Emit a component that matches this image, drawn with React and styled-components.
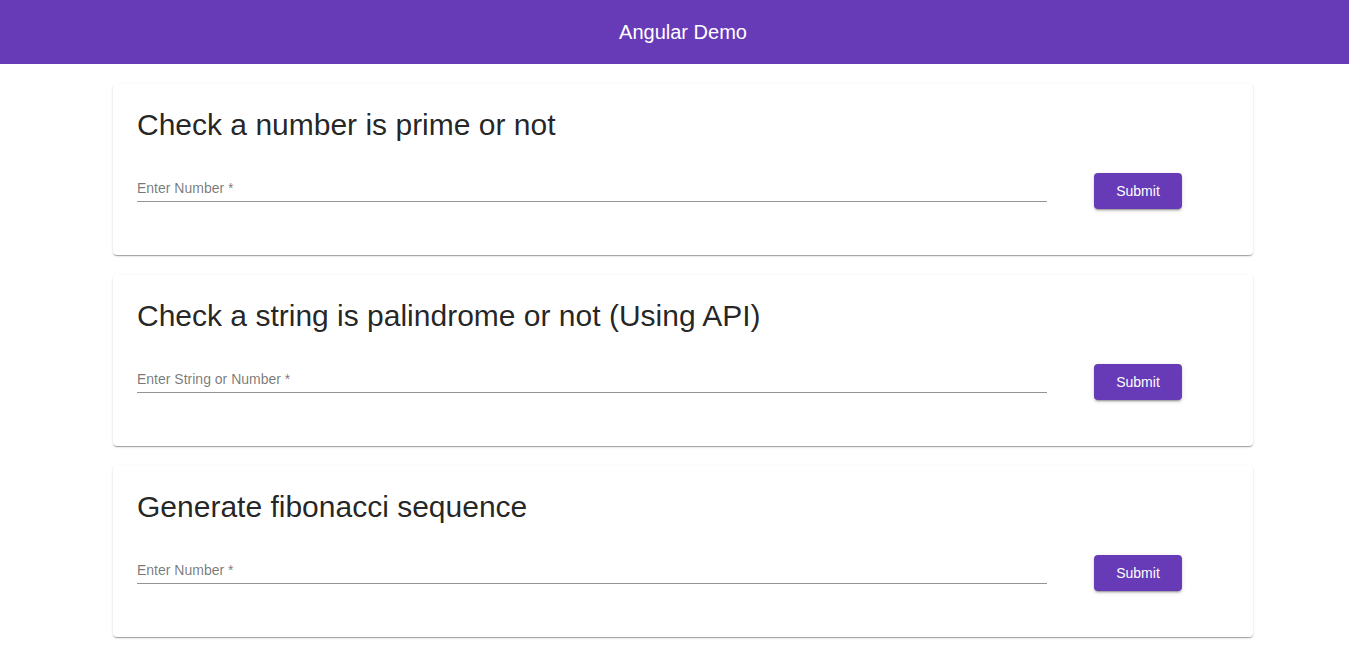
import styled, { createGlobalStyle } from "styled-components";

const GlobalStyle = createGlobalStyle`
    body {
        margin: 0;
        background: #fff;
        overflow-x: hidden;
        font-family: "Liberation Sans", Arial, sans-serif;
    }
`;

// the page was laid out at 1366px wide, so the centre sits at 683
const Page = styled.div`
    width: 1366px;
`;

const Toolbar = styled.header`
    display: flex;
    align-items: center;
    justify-content: center;
    height: 64px;
    background: #673ab7;
    color: #fff;
    font-size: 20px;
`;

const Main = styled.main`
    display: flex;
    flex-direction: column;
    gap: 20px;
    width: 1140px;
    margin: 20px auto;
`;

const Card = styled.section`
    background: #fff;
    border-radius: 4px;
    padding: 24px 24px 0;
    height: 171px;
    box-sizing: border-box;
    box-shadow: 0 2px 1px -1px rgba(0, 0, 0, 0.2), 0 1px 1px 0 rgba(0, 0, 0, 0.14),
        0 1px 3px 0 rgba(0, 0, 0, 0.12);
`;

const Title = styled.h2`
    margin: 0;
    font-size: 30px;
    font-weight: 400;
    line-height: 34px;
    color: rgba(0, 0, 0, 0.87);
`;

const FormRow = styled.div`
    display: flex;
    align-items: flex-start;
    gap: 47px;
    margin-top: 31px;
`;

const Field = styled.label`
    display: block;
    width: 910px;
    height: 29px;
    box-sizing: border-box;
    padding-top: 7px;
    border-bottom: 1px solid #949494;
    font-size: 14px;
    line-height: 16px;
    color: rgba(0, 0, 0, 0.54);
`;

const Button = styled.button`
    width: 88px;
    height: 36px;
    border: none;
    border-radius: 4px;
    background: #673ab7;
    color: #fff;
    font-family: inherit;
    font-size: 14px;
    font-weight: 500;
    box-shadow: 0 3px 1px -2px rgba(0, 0, 0, 0.2), 0 2px 2px 0 rgba(0, 0, 0, 0.14),
        0 1px 5px 0 rgba(0, 0, 0, 0.12);
    cursor: pointer;
`;

const forms = [
    { title: "Check a number is prime or not", label: "Enter Number *" },
    { title: "Check a string is palindrome or not (Using API)", label: "Enter String or Number *" },
    { title: "Generate fibonacci sequence", label: "Enter Number *" },
];

const App = () => {
    return (
        <Page>
            <GlobalStyle />
            <Toolbar>Angular Demo</Toolbar>
            <Main>
                {forms.map((f) => (
                    <Card key={f.title}>
                        <Title>{f.title}</Title>
                        <FormRow>
                            <Field>{f.label}</Field>
                            <Button>Submit</Button>
                        </FormRow>
                    </Card>
                ))}
            </Main>
        </Page>
    );
};

export default App;
